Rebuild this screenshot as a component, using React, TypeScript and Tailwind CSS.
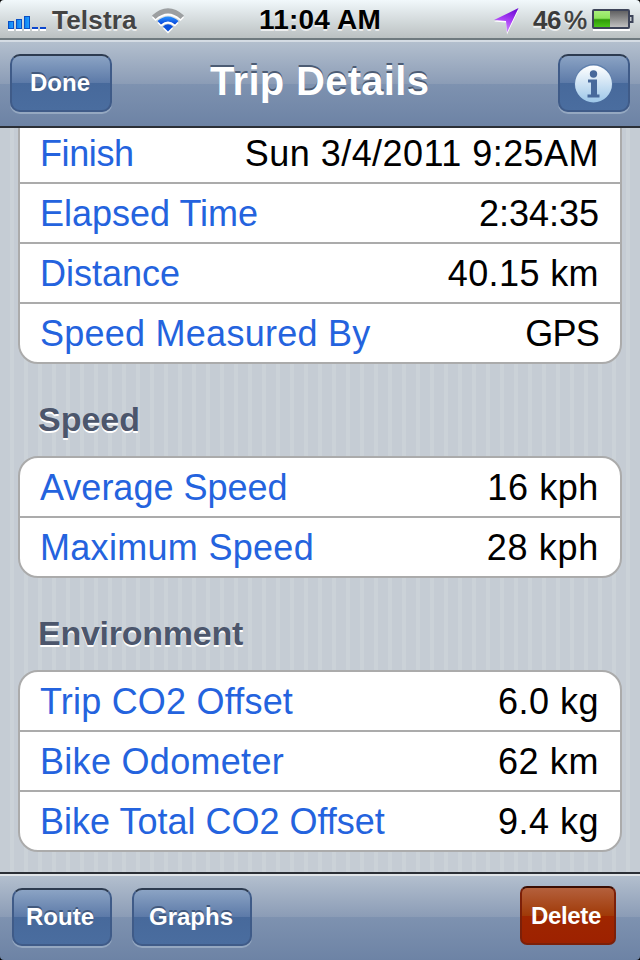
import React from "react";

interface Detail {
  label: string;
  value: string;
  labelClass?: string;
  valueClass?: string;
}

interface ButtonProps {
  children: React.ReactNode;
  className?: string;
  danger?: boolean;
}

const tripRows: Detail[] = [
  { label: "Finish", value: "Sun 3/4/2011 9:25AM", labelClass: "tracking-[-0.4px]", valueClass: "tracking-[0.45px]" },
  { label: "Elapsed Time", value: "2:34:35" },
  { label: "Distance", value: "40.15 km", valueClass: "tracking-[0.4px]" },
  {
    label: "Speed Measured By",
    value: "GPS",
    labelClass: "tracking-[0.25px]",
    valueClass: "tracking-[-0.8px]",
  },
];

const speedRows: Detail[] = [
  { label: "Average Speed", value: "16 kph", valueClass: "tracking-[0.6px]" },
  { label: "Maximum Speed", value: "28 kph", labelClass: "tracking-[0.3px]", valueClass: "tracking-[0.7px]" },
];

const environmentRows: Detail[] = [
  { label: "Trip CO2 Offset", value: "6.0 kg", labelClass: "tracking-[0.2px]", valueClass: "tracking-[0.5px]" },
  { label: "Bike Odometer", value: "62 km", labelClass: "tracking-[0.3px]", valueClass: "tracking-[0.6px]" },
  { label: "Bike Total CO2 Offset", value: "9.4 kg", valueClass: "tracking-[0.5px]" },
];

const SignalIcon = () => (
  <svg width="40" height="18" viewBox="0 0 40 18" className="mt-[9px]">
    <defs>
      <linearGradient id="bar" x1="0" y1="0" x2="1" y2="0">
        <stop offset="0" stopColor="#0b7df0" />
        <stop offset="1" stopColor="#25a2ff" />
      </linearGradient>
    </defs>
    <path d="M0 14h6v2H0zM8 14h6v2H8zM16 14h6v2h-6zM24 14h6v2h-6zM32 14h6v2h-6z" fill="#fff" />
    <g stroke="#0a4fc4" strokeWidth="1" fill="url(#bar)">
      <rect x="0.5" y="6.5" width="5" height="7" />
      <rect x="8.5" y="4.5" width="5" height="9" />
      <rect x="16.5" y="1.5" width="5" height="12" />
    </g>
    <path d="M24 12h6v2h-6zM32 12h6v2h-6z" fill="#0c48ce" />
  </svg>
);

const WifiIcon = () => (
  <svg width="34" height="27" viewBox="0 0 34 27" className="mt-[3px]">
    <defs>
      <linearGradient id="wifi" x1="0" y1="0" x2="0" y2="1">
        <stop offset="0" stopColor="#2a93ff" />
        <stop offset="1" stopColor="#0742d8" />
      </linearGradient>
    </defs>
    <g transform="translate(0 2)" fill="#fff">
      <path d="M1 7.500Q17-7 33 7.500L29.500 11Q17 0 4.500 11Z" />
      <path d="M6.500 13Q17 4 27.500 13L24 16.500Q17 10.500 10 16.500Z" />
      <path d="M12 18.500Q17 14 22 18.500L17 23.500Z" />
    </g>
    <path d="M1 7.500Q17-7 33 7.500L29.500 11Q17 0 4.500 11Z" fill="#9c9fa1" />
    <path d="M6.500 13Q17 4 27.500 13L24 16.500Q17 10.500 10 16.500Z" fill="url(#wifi)" />
    <path d="M12 18.500Q17 14 22 18.500L17 23.500Z" fill="#0950dc" />
  </svg>
);

const LocationIcon = () => (
  <svg width="27" height="28" viewBox="0 0 27 28" className="mt-1">
    <defs>
      <linearGradient id="arrow" x1="0.8" y1="0" x2="0.5" y2="1">
        <stop offset="0" stopColor="#6a09d2" />
        <stop offset="0.5" stopColor="#a63cf4" />
        <stop offset="1" stopColor="#d08aff" />
      </linearGradient>
    </defs>
    <path d="M25.500 2L14 26.500L13 14.500L1 13.500Z" fill="#fff" />
    <path d="M25.500 0L14 24.500L13 13L1 12Z" fill="url(#arrow)" />
  </svg>
);

const BatteryIcon = () => (
  <svg width="43" height="23" viewBox="0 0 43 23" className="mt-0.5">
    <defs>
      <linearGradient id="charge" x1="0" y1="0" x2="0" y2="1">
        <stop offset="0" stopColor="#a9ee7c" />
        <stop offset="0.45" stopColor="#8fe65c" />
        <stop offset="0.55" stopColor="#2f9a08" />
        <stop offset="1" stopColor="#4bc51a" />
      </linearGradient>
      <linearGradient id="empty" x1="0" y1="0" x2="0" y2="1">
        <stop offset="0" stopColor="#5c5c5e" />
        <stop offset="0.45" stopColor="#8a8a8a" />
        <stop offset="1" stopColor="#c6c6c6" />
      </linearGradient>
    </defs>
    <path d="M1 20h37v2H1z" fill="#fff" />
    <rect x="1" y="1" width="36" height="18" rx="1" fill="url(#empty)" stroke="#3d4459" strokeWidth="2" />
    <rect x="2" y="2" width="16" height="16" fill="url(#charge)" />
    <path d="M38 7h2.500v6H38" fill="#c5cacd" stroke="#3d4459" strokeWidth="2" />
  </svg>
);

const InfoIcon = () => (
  <svg width="40" height="40" viewBox="0 0 40 40">
    <defs>
      <linearGradient id="info" x1="0" y1="0" x2="0" y2="1">
        <stop offset="0" stopColor="#ffffff" />
        <stop offset="1" stopColor="#9cc6e8" />
      </linearGradient>
    </defs>
    <circle cx="19.500" cy="20" r="19" fill="#5f80ad" />
    <circle cx="19.500" cy="21" r="18.500" fill="url(#info)" />
    <g fill="#48699b">
      <circle cx="19.500" cy="11" r="3.700" />
      <path d="M14 16.500H23V31.500H25.500V34.500H13.500V31.500H17V19.500H14Z" />
    </g>
  </svg>
);

const BarButton = ({ children, className, danger }: ButtonProps) => (
  <button
    className={`flex shrink-0 items-center justify-center border-2 text-[24px] font-bold leading-none text-white ${
      danger
        ? "rounded-[7px] border-[#7c2009] border-t-[#3a0d02] bg-[linear-gradient(#b4603c,#a03a08_50%,#9f2600_50%,#9d2100)] pr-1 tracking-[-0.3px]"
        : "rounded-[10px] border-[#3f5b88] border-t-[#2d3b50] bg-[linear-gradient(#8ba3c4,#5c7aa8_50%,#47699b_50%,#4a6d9f)] shadow-[0_2px_0_#95a8c1] [text-shadow:0_-2px_0_#42597d]"
    } ${className ?? ""}`}
  >
    {children}
  </button>
);

const Group = ({ rows, className }: { rows: Detail[]; className?: string }) => (
  <div
    className={`mx-[18px] divide-y-2 divide-[#ababab] rounded-[20px] border-2 border-[#ababab] bg-white ${className ?? ""}`}
  >
    {rows.map((row) => (
      <div
        key={row.label}
        className="box-content flex h-[58px] items-center justify-between pl-5 pr-[21px] text-[36px] leading-[60px]"
      >
        <span className={`whitespace-nowrap pt-0.5 text-[#2463de] ${row.labelClass ?? ""}`}>{row.label}</span>
        <span className={`whitespace-nowrap pt-0.5 text-black ${row.valueClass ?? ""}`}>{row.value}</span>
      </div>
    ))}
  </div>
);

const GroupTitle = ({ children, className }: { children: React.ReactNode; className?: string }) => (
  <h2
    className={`h-[92px] pl-[38px] pt-[35px] text-[34px] font-bold leading-[40px] text-[#4c566c] [text-shadow:0_2px_0_#fff] ${className ?? ""}`}
  >
    {children}
  </h2>
);

export default function App() {
  return (
    <div className="h-[960px] w-[640px] overflow-hidden bg-black font-['Liberation_Sans',Arial,sans-serif]">
      <div className="flex h-full flex-col overflow-hidden rounded-[4px]">
        {/* status bar */}
        <div className="grid h-10 shrink-0 grid-cols-3 border-b-2 border-[#6f7a7f] bg-linear-to-b from-[#f1f8fb] to-[#bbc1c2] text-[26px] font-bold leading-[38px] [text-shadow:0_2px_0_#ffffffb0]">
          <div className="flex items-center pl-2 text-[#444]">
            <SignalIcon />
            <span className="ml-1 tracking-[0.2px]">Telstra</span>
            <span className="ml-[14px]">
              <WifiIcon />
            </span>
          </div>
          <div className="pt-px text-center text-[28px] tracking-[0.2px] text-black">11:04 AM</div>
          <div className="flex items-center justify-end pr-[5px] text-[#3b3b3b]">
            <LocationIcon />
            <span className="ml-[13px] tracking-[-0.5px]">46</span>
            <span className="ml-[3px] mr-[6px] w-[22px] font-normal [-webkit-text-stroke:0.5px_#3b3b3b]">%</span>
            <BatteryIcon />
          </div>
        </div>

        {/* navigation bar */}
        <div className="flex h-[88px] shrink-0 items-start border-b-2 border-t-2 border-b-[#2b2f36] border-t-[#d5dce4] bg-[linear-gradient(#b3bfce,#8b9cb6_50%,#7e92b0_50%,#6d83a5)] px-[10px] pt-3">
          <BarButton className="h-[58px] w-[102px] pr-0.5">Done</BarButton>
          <h1 className="flex-1 pl-[98px] text-[40px] font-bold leading-[54px] tracking-[0.3px] text-white [text-shadow:0_-2px_0_#4c5c74]">
            Trip Details
          </h1>
          <BarButton className="h-[58px] w-[72px]">
            <InfoIcon />
          </BarButton>
        </div>

        {/* trip details, scrolled to the end */}
        <div className="flex-1 overflow-hidden bg-[repeating-linear-gradient(90deg,#c5ccd4_0,#c5ccd4_10px,#cbd2d8_10px,#cbd2d8_14px)]">
          <Group rows={tripRows} className="-mt-1.5 rounded-t-none border-t-2" />
          <GroupTitle>Speed</GroupTitle>
          <Group rows={speedRows} />
          <GroupTitle className="tracking-[-0.25px]">Environment</GroupTitle>
          <Group rows={environmentRows} />
        </div>

        {/* toolbar */}
        <div className="flex h-[88px] shrink-0 items-start border-t-2 border-[#2b2f36] bg-[linear-gradient(#e0e4e8_2px,#b3bfce_2px,#8b9cb6_50%,#7e92b0_50%,#6d83a5)] px-3 pt-3">
          <BarButton className="mt-0.5 h-[58px] w-[100px] pr-1">Route</BarButton>
          <BarButton className="ml-5 mt-0.5 h-[58px] w-[120px] pr-0.5">Graphs</BarButton>
          <BarButton danger className="ml-auto mr-3 h-[59px] w-[96px]">
            Delete
          </BarButton>
        </div>
      </div>
    </div>
  );
}
